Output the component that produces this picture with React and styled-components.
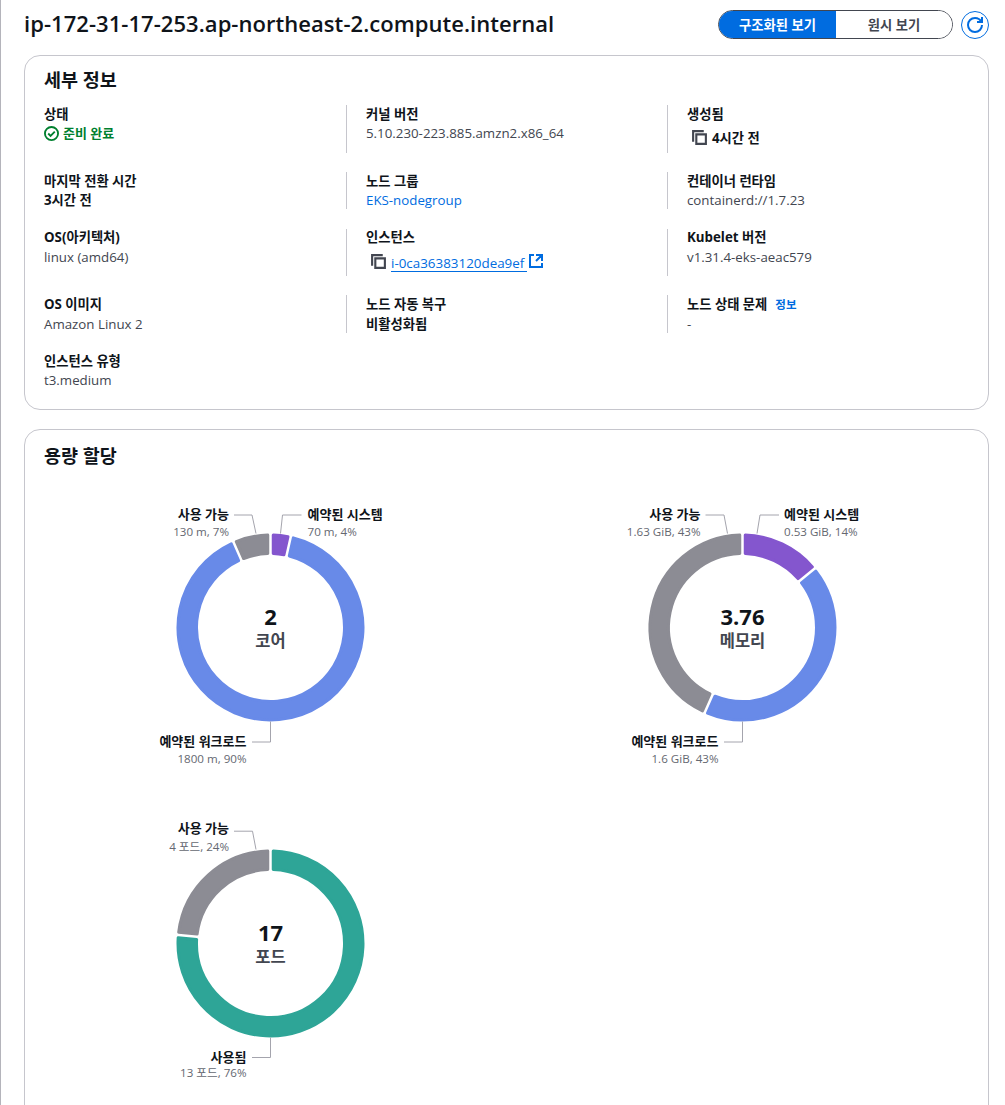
import React from 'react'
import styled, { createGlobalStyle } from 'styled-components'

const GlobalStyle = createGlobalStyle`
    html, body {
        margin: 0;
        height: 1105px;
        overflow: hidden;
        background: #fff;
    }
    body {
        font-family: "Open Sans", "Noto Sans CJK KR", sans-serif;
        font-size: 13.3px;
        color: #0f141a;
    }
`

const Page = styled.div`
    height: 1105px;
    box-sizing: border-box;
    border-left: 1px solid #b4b4bb;
    padding: 0 16px 0 23px;
    overflow: hidden;
`
const Header = styled.header`
    height: 55px;
    display: flex;
    align-items: center;
    justify-content: space-between;
    padding-bottom: 6px;
    box-sizing: border-box;
`
const Title = styled.h1`
    margin: 0 0 4px;
    font-size: 22px;
    font-weight: 600;
    letter-spacing: 0.05px;
`
const Actions = styled.div`
    display: flex;
    align-items: center;
    gap: 8px;
`
const Segmented = styled.div`
    display: flex;
    width: 235px;
    height: 29px;
    box-sizing: border-box;
    border: 1px solid #424650;
    border-radius: 15px;
    overflow: hidden;
`
const Segment = styled.button`
    flex: ${p => (p.$active ? '0 0 117px' : '1')};
    border: 0;
    padding: 0;
    font: inherit;
    font-size: 13.3px;
    font-weight: 700;
    color: ${p => (p.$active ? '#fff' : '#424650')};
    background: ${p => (p.$active ? '#006ce0' : '#fff')};
`
const RoundButton = styled.button`
    width: 28px;
    height: 28px;
    box-sizing: border-box;
    border: 1.5px solid #006ce0;
    border-radius: 50%;
    padding: 0;
    background: #fff;
    display: flex;
    align-items: center;
    justify-content: center;
    color: #006ce0;
`
const Card = styled.section`
    border: 1px solid #c6c6cd;
    border-radius: 16px;
    margin-bottom: 19.3px;
    padding: 0 19px;
`
const ChartCard = styled(Card)`
    padding-top: 2px;
`
const CardTitle = styled.h2`
    margin: 0;
    height: 49px;
    padding-bottom: 3px;
    box-sizing: border-box;
    display: flex;
    align-items: center;
    font-size: 18.5px;
    font-weight: 700;
`
const DetailGrid = styled.div`
    display: grid;
    grid-template-columns: 302px 321px 1fr;
    row-gap: 19.2px;
    padding-bottom: 19px;
`
const Cell = styled.div`
    padding: 0 0 1px ${p => (p.$first ? 0 : '19px')};
    border-left: ${p => (p.$first ? '0' : '1px solid #c6c6cd')};
`
const Label = styled.div`
    display: flex;
    gap: 8px;
    align-items: center;
    height: 18.8px;
    margin-top: -1px;
    font-size: 13.3px;
    font-weight: 700;
`
const Value = styled.div`
    display: flex;
    align-items: center;
    min-height: 16.8px;
    padding-top: 2px;
    line-height: 16px;
    color: #424650;
`
const StrongValue = styled(Value)`
    font-weight: 700;
    color: #0f141a;
`
const Ready = styled(StrongValue)`
    gap: 4px;
    color: #00802f;
    font-size: 13px;
`
const TextLink = styled.a`
    color: #006ce0;
`
const InfoLink = styled.a`
    color: #006ce0;
    font-size: 11.5px;
    font-weight: 700;
`
const Copyable = styled.div`
    display: flex;
    align-items: center;
    height: 28.8px;
    padding: 1px 0 0 4px;
    box-sizing: border-box;
    gap: 4px;
    font-weight: 700;
    color: #0f141a;
`
const CopyIcon = styled.svg`
    width: 17px;
    height: 17px;
    flex: none;
    fill: none;
    stroke: #424650;
    stroke-width: 2;
`
const InstanceLink = styled.a`
    color: #006ce0;
    font-size: 13.4px;
    font-weight: 400;
    border-bottom: 1px solid #006ce0;
    padding: 2px 3px 0 0;
    margin-top: 2px;
    line-height: 16px;
`
const ExternalIcon = styled.svg`
    width: 16px;
    height: 16px;
    margin-left: -3px;
    flex: none;
    fill: none;
    stroke: #006ce0;
    stroke-width: 2;
`
const ChartGrid = styled.div`
    display: grid;
    grid-template-columns: repeat(2, 472px);
    grid-auto-rows: 316px;
    margin: 8.5px 0 0 -9px;
`
const ChartSvg = styled.svg`
    display: block;
    width: 471px;
    height: 316px;
`
const SliceName = styled.text`
    font-size: 13px;
    font-weight: 700;
    fill: #0f141a;
    dominant-baseline: central;
`
const SliceValue = styled.text`
    font-size: 11.6px;
    fill: #656871;
    dominant-baseline: central;
`
const Total = styled.text`
    font-size: 22px;
    font-weight: 700;
    fill: #0f141a;
    text-anchor: middle;
    dominant-baseline: central;
`
const Unit = styled.text`
    font-size: 16.5px;
    font-weight: 700;
    fill: #424650;
    text-anchor: middle;
    dominant-baseline: central;
`
const Leader = styled.polyline`
    fill: none;
    stroke: #a4a4ad;
    stroke-width: 1;
`

const BLUE = '#688ae8'
const PURPLE = '#8456ce'
const GRAY = '#8c8c94'
const TEAL = '#2ea597'

const charts = [
    {
        total: '2',
        unit: '코어',
        slices: [
            { value: 70, color: PURPLE, name: '예약된 시스템', detail: '70 m, 4%', line: [[10, -94], [12, -112.5], [31, -112.5]], x: 37, y: -113.5, sub: 17, end: false },
            { value: 1800, color: BLUE, name: '예약된 워크로드', detail: '1800 m, 90%', line: [[0, 94], [0, 114.5], [-18.5, 114.5]], x: -24, y: 113.5, sub: 17, end: true },
            { value: 130, color: GRAY, name: '사용 가능', detail: '130 m, 7%', line: [[-14.5, -94], [-18.5, -112.5], [-36.5, -112.5]], x: -41.5, y: -113.5, sub: 17, end: true },
        ],
    },
    {
        total: '3.76',
        unit: '메모리',
        slices: [
            { value: 0.53, color: PURPLE, name: '예약된 시스템', detail: '0.53 GiB, 14%', line: [[14.5, -94], [17.5, -112.5], [36.5, -112.5]], x: 41.5, y: -113.5, sub: 17, end: false },
            { value: 1.6, color: BLUE, name: '예약된 워크로드', detail: '1.6 GiB, 43%', line: [[0, 94], [0, 114.5], [-18.5, 114.5]], x: -24, y: 113.5, sub: 17, end: true },
            { value: 1.63, color: GRAY, name: '사용 가능', detail: '1.63 GiB, 43%', line: [[-15, -94], [-18.5, -112.5], [-37, -112.5]], x: -42, y: -113.5, sub: 17, end: true },
        ],
    },
    {
        total: '17',
        unit: '포드',
        slices: [
            { value: 13, color: TEAL, name: '사용됨', detail: '13 포드, 76%', line: [[0, 94], [0, 114], [-18.5, 114]], x: -24, y: 113, sub: 16, end: true },
            { value: 4, color: GRAY, name: '사용 가능', detail: '4 포드, 24%', line: [[-14.5, -94], [-18, -112.3], [-36.5, -112.3]], x: -41.5, y: -116, sub: 19, end: true },
        ],
    },
]

const point = (radius, angle) => `${(radius * Math.sin(angle)).toFixed(2)} ${(-radius * Math.cos(angle)).toFixed(2)}`

// ring segment, the round stroke gives it the soft corners
const arcPath = (start, end) => {
    const R = 92.5
    const r = 74
    const inset = 2.75
    const large = end - start > Math.PI ? 1 : 0
    return [
        `M${point(R, start + inset / R)}`,
        `A${R} ${R} 0 ${large} 1 ${point(R, end - inset / R)}`,
        `L${point(r, end - inset / r)}`,
        `A${r} ${r} 0 ${large} 0 ${point(r, start + inset / r)}`,
        'Z',
    ].join(' ')
}

const Donut = ({ total, unit, slices }) => {
    const sum = slices.reduce((acc, s) => acc + s.value, 0)
    let angle = 0
    return (
        <ChartSvg viewBox="-235.5 -137.5 471 316">
            {slices.map(s => {
                const start = angle
                angle += (s.value / sum) * Math.PI * 2
                return (
                    <g key={s.name}>
                        <path d={arcPath(start, angle)} fill={s.color} stroke={s.color} strokeWidth="3" strokeLinejoin="round" />
                        <Leader points={s.line.map(p => p.join(',')).join(' ')} />
                        <SliceName x={s.x} y={s.y} textAnchor={s.end ? 'end' : 'start'}>{s.name}</SliceName>
                        <SliceValue x={s.x} y={s.y + s.sub} textAnchor={s.end ? 'end' : 'start'}>{s.detail}</SliceValue>
                    </g>
                )
            })}
            <Total x="0" y="-12">{total}</Total>
            <Unit x="0" y="13">{unit}</Unit>
        </ChartSvg>
    )
}

const Copy = () => (
    <CopyIcon viewBox="0 0 16 16">
        <path d="M2 12V2h10" />
        <path d="M5 5h9v9H5z" />
    </CopyIcon>
)

const App = () => {
    return (
        <Page>
            <GlobalStyle />
            <Header>
                <Title>ip-172-31-17-253.ap-northeast-2.compute.internal</Title>
                <Actions>
                    <Segmented>
                        <Segment $active>구조화된 보기</Segment>
                        <Segment>원시 보기</Segment>
                    </Segmented>
                    <RoundButton aria-label="새로 고침">
                        <svg width="16" height="16" viewBox="0 0 16 16" fill="none" stroke="currentColor" strokeWidth="2">
                            <path d="M10 5h5V0" />
                            <path d="M15 8a6.99 6.99 0 0 1-7 7 6.99 6.99 0 0 1-7-7c0-3.87 3-7 7-7 2.88 0 5.3 1.64 6.5 4" />
                        </svg>
                    </RoundButton>
                </Actions>
            </Header>

            <Card>
                <CardTitle>세부 정보</CardTitle>
                <DetailGrid>
                    <Cell $first>
                        <Label>상태</Label>
                        <Ready>
                            <svg width="15" height="15" viewBox="0 0 16 16" fill="none" stroke="#00802f" strokeWidth="2">
                                <circle cx="8" cy="8" r="7" />
                                <path d="M4.5 8l2.5 2.5 4.5-4.5" />
                            </svg>
                            준비 완료
                        </Ready>
                    </Cell>
                    <Cell>
                        <Label>커널 버전</Label>
                        <Value>5.10.230-223.885.amzn2.x86_64</Value>
                    </Cell>
                    <Cell>
                        <Label>생성됨</Label>
                        <Copyable><Copy />4시간 전</Copyable>
                    </Cell>

                    <Cell $first>
                        <Label>마지막 전환 시간</Label>
                        <StrongValue>3시간 전</StrongValue>
                    </Cell>
                    <Cell>
                        <Label>노드 그룹</Label>
                        <Value><TextLink>EKS-nodegroup</TextLink></Value>
                    </Cell>
                    <Cell>
                        <Label>컨테이너 런타임</Label>
                        <Value>containerd://1.7.23</Value>
                    </Cell>

                    <Cell $first>
                        <Label>OS(아키텍처)</Label>
                        <Value>linux (amd64)</Value>
                    </Cell>
                    <Cell>
                        <Label>인스턴스</Label>
                        <Copyable>
                            <Copy />
                            <InstanceLink>i-0ca36383120dea9ef</InstanceLink>
                            <ExternalIcon viewBox="0 0 16 16">
                                <path d="M14 8.01v-6H8M14.02 2 8 8.01M6 2.01H2v12h12v-3.99" />
                            </ExternalIcon>
                        </Copyable>
                    </Cell>
                    <Cell>
                        <Label>Kubelet 버전</Label>
                        <Value>v1.31.4-eks-aeac579</Value>
                    </Cell>

                    <Cell $first>
                        <Label>OS 이미지</Label>
                        <Value>Amazon Linux 2</Value>
                    </Cell>
                    <Cell>
                        <Label>노드 자동 복구</Label>
                        <StrongValue>비활성화됨</StrongValue>
                    </Cell>
                    <Cell>
                        <Label>노드 상태 문제 <InfoLink>정보</InfoLink></Label>
                        <Value>-</Value>
                    </Cell>

                    <Cell $first>
                        <Label>인스턴스 유형</Label>
                        <Value>t3.medium</Value>
                    </Cell>
                </DetailGrid>
            </Card>

            <ChartCard>
                <CardTitle>용량 할당</CardTitle>
                <ChartGrid>
                    {charts.map(c => <Donut key={c.unit} {...c} />)}
                </ChartGrid>
            </ChartCard>
        </Page>
    )
}

export default App
